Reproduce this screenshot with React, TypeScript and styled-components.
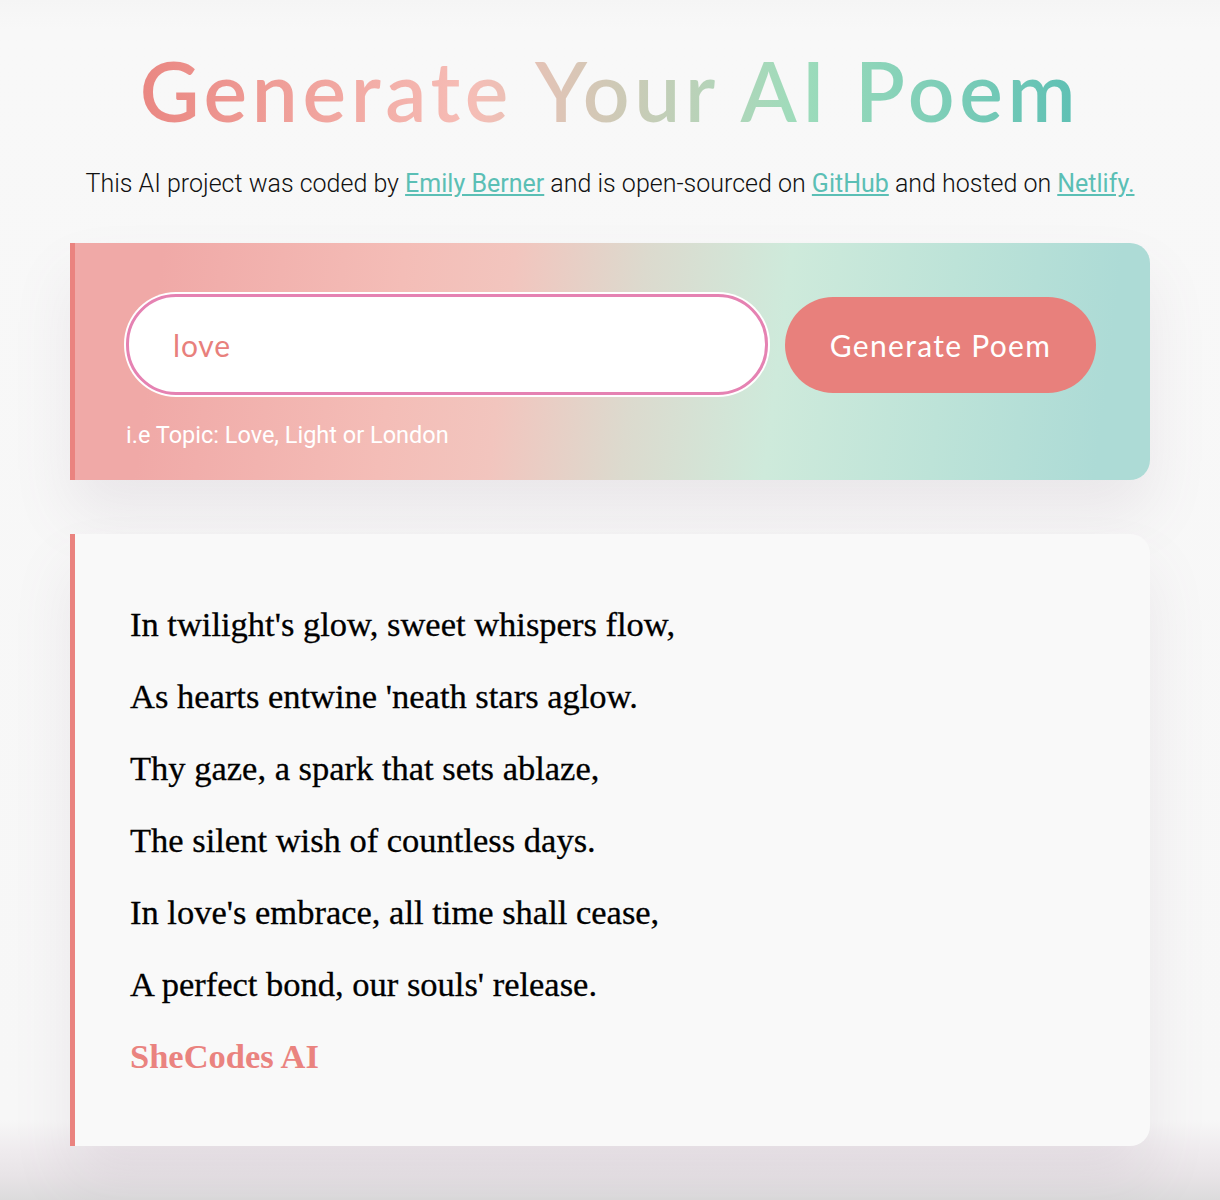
import React from "react";
import styled, { createGlobalStyle } from "styled-components";

const Global = createGlobalStyle`
  html, body { margin: 0; padding: 0; }
  body {
    min-height: 1200px;
    background: linear-gradient(
      to bottom,
      #f5f5f5 0px,
      #f8f8f8 30px,
      #f7f7f7 1120px,
      #efebee 1150px,
      #e8e4e7 1175px,
      #dcdbdc 1200px
    );
    font-family: Roboto, "Liberation Sans", sans-serif;
  }
`;

const Page = styled.div`
  width: 1080px;
  margin: 0 auto;
  padding: 34px 0 40px;
`;

const Title = styled.h1`
  margin: 0 auto;
  text-align: center;
  font-family: Lato, "Noto Sans", sans-serif;
  font-weight: 600;
  font-size: 82px;
  line-height: 112px;
  letter-spacing: 4.7px;
  background: linear-gradient(90deg, #ea8782 0%, #f6bdb6 35%, #d0c9b6 50%, #9edcbb 70%, #5ec0b4 100%);
  -webkit-background-clip: text;
  background-clip: text;
  color: transparent;
  width: fit-content;
`;

const Sub = styled.p`
  margin: 23px 0 0;
  text-align: center;
  font-family: Roboto, sans-serif;
  font-weight: 300;
  font-size: 25px;
  line-height: 30px;
  color: #111;
`;

const Link = styled.a`
  color: #5bbfb5;
  text-decoration: underline;
  font-weight: 400;
`;

const Card = styled.div`
  border-left: 5px solid #ea837f;
  border-radius: 0 20px 20px 0;
  box-shadow: 0 34px 60px rgba(130, 100, 130, 0.11);
`;

const FormCard = styled(Card)`
  margin-top: 44px;
  padding: 51px 53px 30px 51px;
  background: linear-gradient(97deg, #f0a9a7 8%, #f4bdb7 30%, #f2c5be 40%, #dcdace 52%, #ceeadb 65%, #bde3d8 80%, #addbd6 95%);
`;

const Row = styled.form`
  display: flex;
  align-items: center;
  gap: 17px;
`;

const Input = styled.input`
  flex: 0 0 642px;
  box-sizing: border-box;
  height: 101px;
  border-radius: 50px;
  border: 3px solid #e582b2;
  box-shadow: 0 0 0 2px #ffffff;
  background: #fff;
  padding: 0 44px;
  font-family: Lato, "Noto Sans", sans-serif;
  font-size: 30px;
  letter-spacing: 0.8px;
  color: #e8807c;
  outline: none;
`;

const Button = styled.button`
  width: 311px;
  height: 96px;
  border: none;
  border-radius: 48px;
  background: #e8807c;
  color: #fff;
  font-family: Lato, "Noto Sans", sans-serif;
  font-weight: 400;
  font-size: 30px;
  letter-spacing: 1.3px;
  cursor: pointer;
`;

const Hint = styled.div`
  margin-top: 25px;
  color: #fff;
  font-family: Roboto, sans-serif;
  font-size: 23.5px;
  line-height: 30px;
`;

const PoemCard = styled(Card)`
  margin-top: 54px;
  background: #f9f9f9;
  padding: 54px 55px 54px;
`;

const Line = styled.div<{ $accent?: boolean }>`
  font-family: "Liberation Serif", "DejaVu Serif", serif;
  font-size: 34.5px;
  line-height: 72px;
  color: ${(p) => (p.$accent ? "#ea837f" : "#000")};
  font-weight: ${(p) => (p.$accent ? 700 : 400)};
  -webkit-text-stroke: ${(p) => (p.$accent ? "0" : "0.3px #000")};
`;

const lines = [
  "In twilight's glow, sweet whispers flow,",
  "As hearts entwine 'neath stars aglow.",
  "Thy gaze, a spark that sets ablaze,",
  "The silent wish of countless days.",
  "In love's embrace, all time shall cease,",
  "A perfect bond, our souls' release.",
];

export default function App() {
  return (
    <>
      <Global />
      <Page>
        <Title>Generate Your AI Poem</Title>
        <Sub>
          This AI project was coded by <Link href="#">Emily Berner</Link> and is open-sourced on{" "}
          <Link href="#">GitHub</Link> and hosted on <Link href="#">Netlify.</Link>
        </Sub>
        <FormCard>
          <Row onSubmit={(e) => e.preventDefault()}>
            <Input defaultValue="love" />
            <Button type="submit">Generate Poem</Button>
          </Row>
          <Hint>i.e Topic: Love, Light or London</Hint>
        </FormCard>
        <PoemCard>
          {lines.map((l) => (
            <Line key={l}>{l}</Line>
          ))}
          <Line $accent>SheCodes AI</Line>
        </PoemCard>
      </Page>
    </>
  );
}
